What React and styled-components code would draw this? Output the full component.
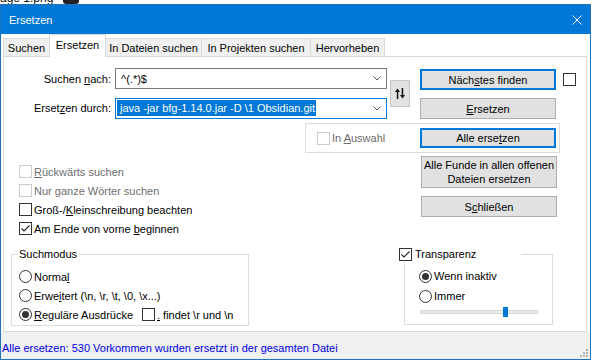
import React from "react";
import styled, { createGlobalStyle } from "styled-components";

const GlobalStyle = createGlobalStyle`
  html, body {
    margin: 0;
    padding: 0;
    background: #fff;
  }
  body {
    font-family: "Liberation Sans", Arial, sans-serif;
    font-size: 11px;
    color: #000;
  }
`;

const Page = styled.div`
  width: 592px;
  height: 362px;
  overflow: hidden;
  background: #fff;
`;

// strip of the window behind the dialog
const Backdrop = styled.div`
  height: 4px;
  overflow: hidden;
  display: flex;
  align-items: flex-end;
  gap: 10px;
  font-size: 12px;
  line-height: 12px;
  color: #111;
`;

const BackdropBadge = styled.span`
  width: 16px;
  height: 10px;
  border-radius: 3px;
  background: #222;
`;

const Window = styled.div`
  box-sizing: border-box;
  width: 591px;
  height: 356px;
  border: 1px solid #1f74c0;
  display: flex;
  flex-direction: column;
  background: #fff;
`;

const TitleBar = styled.div`
  flex-shrink: 0;
  height: 29px;
  background: #0078d7;
  color: #fff;
  display: flex;
  align-items: center;
  justify-content: space-between;
  padding: 0 8px;
  font-size: 11px;
`;

const TabStrip = styled.div`
  flex-shrink: 0;
  height: 22px;
  display: flex;
  align-items: flex-end;
  padding-left: 2px;
`;

const Tab = styled.div`
  box-sizing: border-box;
  position: relative;
  z-index: ${(p) => (p.$active ? 2 : 1)};
  width: ${(p) => p.$w}px;
  height: ${(p) => (p.$active ? 23 : 18)}px;
  margin-bottom: ${(p) => (p.$active ? -1 : 0)}px;
  margin-left: -1px;
  border: 1px solid #d9d9d9;
  border-bottom: none;
  background: ${(p) => (p.$active ? "#fff" : "#f0f0f0")};
  display: flex;
  align-items: center;
  justify-content: center;
  padding-bottom: ${(p) => (p.$active ? 2 : 0)}px;
  white-space: nowrap;

  &:first-child {
    margin-left: 0;
  }
`;

const Panel = styled.div`
  flex-shrink: 0;
  box-sizing: border-box;
  height: 276px;
  margin: 0 3px 0 2px;
  border: 1px solid #d9d9d9;
  background: #fff;
  display: flex;
  flex-direction: column;
`;

const StatusBar = styled.div`
  flex: 1;
  background: #f0f0f0;
  display: flex;
  justify-content: space-between;
  padding-left: 1px;
  color: #0000e0;
`;

const StatusText = styled.div`
  margin-top: 9px;
  line-height: 15px;
`;

const Grip = styled.svg`
  align-self: flex-end;
  margin: 0 2px 2px 0;
`;

const Key = styled.u`
  text-decoration: underline;
  text-underline-offset: 1px;
`;

/* ---------- form parts ---------- */

const SearchArea = styled.div`
  display: flex;
  margin-top: 11px;
`;

const Fields = styled.div`
  display: grid;
  grid-template-columns: 107px 272px;
  column-gap: 4px;
  row-gap: 8px;
  align-items: center;
`;

const FieldLabel = styled.label`
  text-align: right;
  white-space: nowrap;
`;

const Combo = styled.div`
  box-sizing: border-box;
  height: 21px;
  border: 1px solid ${(p) => (p.$focus ? "#0078d7" : "#7a7a7a")};
  background: #fff;
  display: flex;
  align-items: center;
  padding: 0 5px 0 ${(p) => (p.$focus ? 1 : 5)}px;
  white-space: nowrap;
`;

const ComboValue = styled.span`
  flex: 1;
  overflow: hidden;
`;

const Selection = styled.span`
  display: inline-block;
  background: #0078d7;
  color: #fff;
  line-height: 16px;
  padding: 0 1px 0 3px;
`;

const SwapButton = styled.div`
  box-sizing: border-box;
  align-self: center;
  width: 20px;
  height: 27px;
  margin-left: 3px;
  background: #e1e1e1;
  border: 1px solid #c4c4c4;
  display: flex;
  align-items: center;
  justify-content: center;
`;

const ActionColumn = styled.div`
  display: flex;
  flex-direction: column;
  gap: 8px;
  margin: 1px 0 0 10px;
`;

const ButtonLine = styled.div`
  display: flex;
  align-items: center;
  gap: 7px;
`;

const Button = styled.div`
  box-sizing: border-box;
  width: 136px;
  height: ${(p) => p.$h || 21}px;
  background: #e1e1e1;
  border: 1px solid ${(p) => (p.$primary ? "#0078d7" : "#adadad")};
  box-shadow: ${(p) => (p.$primary ? "inset 0 0 0 1px #0078d7" : "none")};
  display: flex;
  align-items: center;
  justify-content: center;
  text-align: center;
  line-height: 14px;
`;

const SelectionFrame = styled.div`
  box-sizing: border-box;
  width: 255px;
  height: 30px;
  margin: 4px 0 0 301px;
  border: 1px solid #dcdcdc;
  display: flex;
  align-items: center;
  justify-content: space-between;
  padding: 0 3px 0 11px;
`;

const MiddleArea = styled.div`
  height: 85px;
  display: flex;
  justify-content: space-between;
  padding: 0 29px 0 15px;
`;

const OptionList = styled.div`
  display: flex;
  flex-direction: column;
  padding-top: ${(p) => p.$top || 0}px;
`;

const RightActions = styled.div`
  display: flex;
  flex-direction: column;
  gap: 8px;
  padding-top: 3px;
`;

const Option = styled.label`
  display: flex;
  align-items: center;
  height: ${(p) => p.$h || 19}px;
  width: ${(p) => (p.$w ? `${p.$w}px` : "auto")};
  flex-shrink: 0;
  gap: 2px;
  white-space: nowrap;
  color: ${(p) => (p.$disabled ? "#6d6d6d" : "#000")};
`;

const Box = styled.span`
  box-sizing: border-box;
  width: 13px;
  height: 13px;
  flex-shrink: 0;
  border: 1px solid ${(p) => (p.$disabled ? "#cccccc" : "#333")};
  background: #fff;
  display: flex;
  align-items: center;
  justify-content: center;
`;

const Round = styled.span`
  box-sizing: border-box;
  width: 13px;
  height: 13px;
  flex-shrink: 0;
  border-radius: 50%;
  border: 1px solid #333;
  background: #fff;
  display: flex;
  align-items: center;
  justify-content: center;

  &::after {
    content: "";
    display: ${(p) => (p.$checked ? "block" : "none")};
    width: 7px;
    height: 7px;
    border-radius: 50%;
    background: #333;
  }
`;

const BottomArea = styled.div`
  display: flex;
  margin-top: 9px;
`;

const GroupBox = styled.fieldset`
  box-sizing: border-box;
  min-width: 0;
  margin: 0 0 0 ${(p) => p.$left}px;
  width: ${(p) => p.$w}px;
  height: ${(p) => p.$h}px;
  border: 1px solid #dcdcdc;
  padding: 0 0 0 ${(p) => p.$pad}px;
`;

const Legend = styled.legend`
  display: flex;
  align-items: center;
  gap: 3px;
  height: 15px;
  line-height: 15px;
  margin-left: ${(p) => p.$shift}px;
  padding: 0 ${(p) => p.$right}px 0 1px;
`;

const SliderRow = styled.div`
  height: 12px;
  display: flex;
  align-items: center;
  padding-left: 1px;
`;

const Track = styled.div`
  box-sizing: border-box;
  position: relative;
  width: 118px;
  height: 4px;
  background: #e7eaea;
  border: 1px solid #d6d6d6;
`;

const Thumb = styled.span`
  position: absolute;
  top: -4px;
  width: 5px;
  height: 10px;
  background: #0078d7;
`;

/* ---------- small drawings ---------- */

const Check = () => (
  <svg width="11" height="11" viewBox="0 0 11 11">
    <path d="M1.5 5.5 L4 8 L9.5 2.5" fill="none" stroke="#222" strokeWidth="1.1" />
  </svg>
);

const CheckBox = ({ checked, disabled }) => (
  <Box $disabled={disabled}>{checked && <Check />}</Box>
);

const Chevron = () => (
  <svg width="8" height="5" viewBox="0 0 8 5">
    <path d="M0.5 0.5 L4 4 L7.5 0.5" fill="none" stroke="#555" strokeWidth="1" />
  </svg>
);

const SwapIcon = () => (
  <svg width="10" height="11" viewBox="0 0 10 11">
    <polygon points="0,4 2.5,0.5 5,4" fill="#111" />
    <rect x="1.8" y="3" width="1.5" height="8" fill="#111" />
    <rect x="6.7" y="0" width="1.5" height="8" fill="#111" />
    <polygon points="5,7 7.5,10.5 10,7" fill="#111" />
  </svg>
);

const CloseIcon = () => (
  <svg width="10" height="10" viewBox="0 0 10 10">
    <path d="M0.5 0.5 L9.5 9.5 M9.5 0.5 L0.5 9.5" stroke="#fff" strokeWidth="1" />
  </svg>
);

const GripIcon = () => (
  <Grip width="9" height="9" viewBox="0 0 9 9">
    {[
      [7, 1],
      [4, 4],
      [7, 4],
      [1, 7],
      [4, 7],
      [7, 7],
    ].map(([x, y]) => (
      <rect key={`${x}-${y}`} x={x} y={y} width="2" height="2" fill="#b4b4b4" />
    ))}
  </Grip>
);

const tabs = [
  { label: "Suchen", w: 47 },
  { label: "Ersetzen", w: 57, active: true },
  { label: "In Dateien suchen", w: 97 },
  { label: "In Projekten suchen", w: 110 },
  { label: "Hervorheben", w: 75 },
];

const transparency = 0.73;

const App = () => {
  return (
    <Page>
      <GlobalStyle />
      <Backdrop>
        <span>age 1.png</span>
        <BackdropBadge />
      </Backdrop>
      <Window>
        <TitleBar>
          <span>Ersetzen</span>
          <CloseIcon />
        </TitleBar>

        <TabStrip>
          {tabs.map((t) => (
            <Tab key={t.label} $w={t.w} $active={t.active}>
              {t.label}
            </Tab>
          ))}
        </TabStrip>

        <Panel>
          <SearchArea>
            <Fields>
              <FieldLabel>
                Suchen <Key>n</Key>ach:
              </FieldLabel>
              <Combo>
                <ComboValue>^(.*)$</ComboValue>
                <Chevron />
              </Combo>
              <FieldLabel>
                Erset<Key>z</Key>en durch:
              </FieldLabel>
              <Combo $focus>
                <ComboValue>
                  <Selection>java -jar bfg-1.14.0.jar -D \1 Obsidian.git</Selection>
                </ComboValue>
                <Chevron />
              </Combo>
            </Fields>
            <SwapButton>
              <SwapIcon />
            </SwapButton>
            <ActionColumn>
              <ButtonLine>
                <Button $primary>
                  <span>
                    Näch<Key>s</Key>tes finden
                  </span>
                </Button>
                <CheckBox />
              </ButtonLine>
              <Button>
                <span>
                  <Key>E</Key>rsetzen
                </span>
              </Button>
            </ActionColumn>
          </SearchArea>

          <SelectionFrame>
            <Option $disabled>
              <CheckBox disabled />
              <span>
                In <Key>A</Key>uswahl
              </span>
            </Option>
            <Button $primary $h={20}>
              <span>
                Alle erse<Key>t</Key>zen
              </span>
            </Button>
          </SelectionFrame>

          <MiddleArea>
            <OptionList $top={9}>
              <Option $disabled>
                <CheckBox disabled />
                <span>
                  <Key>R</Key>ückwärts suchen
                </span>
              </Option>
              <Option $disabled>
                <CheckBox disabled />
                <span>
                  Nur <Key>g</Key>anze Wörter suchen
                </span>
              </Option>
              <Option>
                <CheckBox />
                <span>
                  Groß-/<Key>K</Key>leinschreibung beachten
                </span>
              </Option>
              <Option>
                <CheckBox checked />
                <span>
                  Am Ende von vorne <Key>b</Key>eginnen
                </span>
              </Option>
            </OptionList>
            <RightActions>
              <Button $h={32}>
                Alle Funde in allen offenen
                <br />
                Dateien ersetzen
              </Button>
              <Button>
                <span>
                  S<Key>c</Key>hließen
                </span>
              </Button>
            </RightActions>
          </MiddleArea>

          <BottomArea>
            <GroupBox $left={7} $w={238} $h={79} $pad={7}>
              <Legend $shift={-1} $right={2}>
                Suchmodus
              </Legend>
              <OptionList $top={5}>
                <Option>
                  <Round />
                  <span>
                    Norma<Key>l</Key>
                  </span>
                </Option>
                <Option>
                  <Round />
                  <span>
                    Erwe<Key>i</Key>tert (\n, \r, \t, \0, \x...)
                  </span>
                </Option>
                <ButtonLine>
                  <Option $w={116}>
                    <Round $checked />
                    <span>
                      <Key>R</Key>eguläre Ausdrücke
                    </span>
                  </Option>
                  <Option>
                    <CheckBox />
                    <span>
                      <Key>.</Key> findet \r und \n
                    </span>
                  </Option>
                </ButtonLine>
              </OptionList>
            </GroupBox>

            <GroupBox $left={155} $w={149} $h={78} $pad={14}>
              <Legend $shift={-21} $right={45}>
                <CheckBox checked />
                <span>Transparenz</span>
              </Legend>
              <OptionList $top={4}>
                <Option $h={20}>
                  <Round $checked />
                  <span>Wenn inaktiv</span>
                </Option>
                <Option $h={20}>
                  <Round />
                  <span>Immer</span>
                </Option>
              </OptionList>
              <SliderRow>
                <Track>
                  <Thumb style={{ left: `${Math.round(transparency * 112)}px` }} />
                </Track>
              </SliderRow>
            </GroupBox>
          </BottomArea>
        </Panel>

        <StatusBar>
          <StatusText>
            Alle ersetzen: 530 Vorkommen wurden ersetzt in der gesamten Datei
          </StatusText>
          <GripIcon />
        </StatusBar>
      </Window>
    </Page>
  );
};

export default App;
